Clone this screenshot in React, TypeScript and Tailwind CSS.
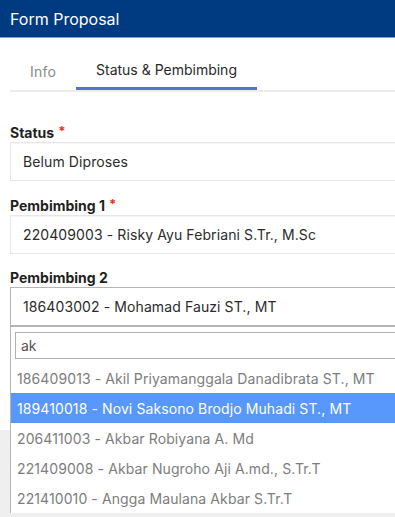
import React from "react";

const options = [
  "186409013 - Akil Priyamanggala Danadibrata ST., MT",
  "189410018 - Novi Saksono Brodjo Muhadi ST., MT",
  "206411003 - Akbar Robiyana A. Md",
  "221409008 - Akbar Nugroho Aji A.md., S.Tr.T",
  "221410010 - Angga Maulana Akbar S.Tr.T",
];

function Label({ text, required }: { text: string; required?: boolean }) {
  return (
    <div className="h-[20px] flex items-center text-[14px] font-bold text-[#1f1f1f]">
      {text}
      {required && <span className="ml-[4px] text-[#e0352b] text-[13px]">*</span>}
    </div>
  );
}

function Field({ value }: { value: string }) {
  return (
    <div className="h-[39px] flex items-center pl-[12px] border border-[#e6e6e6] bg-white text-[14px] tracking-[0.1px] text-[#2b2b2b] shadow-[inset_0_1px_1px_rgba(0,0,0,0.04)]">
      {value}
    </div>
  );
}

export default function App() {
  return (
    <div
      className="relative w-[395px] h-[517px] overflow-hidden bg-white"
      style={{ fontFamily: "Inter, 'Noto Sans', sans-serif" }}
    >
      {/* header */}
      <div className="h-[38px] bg-[#003a80] flex items-center pl-[10px] text-white text-[16px] border-b border-[#8aa0c4]">
        Form Proposal
      </div>

      {/* tabs */}
      <div className="pl-[10px] pt-[14px]">
        <div className="flex w-[430px] border-b-2 border-[#ececec] text-[14px]">
          <div className="h-[38px] flex items-center px-[20px] tracking-[0.2px] text-[#8a8a8a]">Info</div>
          <div className="h-[38px] flex items-center px-[20px] tracking-[0px] text-[#2a2a2a] border-b-[3px] border-[#5b6fd0] -mb-[2px]">
            Status &amp; Pembimbing
          </div>
        </div>
      </div>

      {/* form */}
      <div className="pl-[10px] pt-[30px] w-[430px]">
        <Label text="Status" required />
        <Field value="Belum Diproses" />
        <div className="h-[14px]" />
        <Label text="Pembimbing 1" required />
        <Field value="220409003 - Risky Ayu Febriani S.Tr., M.Sc" />
        <div className="h-[13px]" />
        <Label text="Pembimbing 2" />
        <div className="h-[39px] flex items-center pl-[12px] border border-[#b5b5b5] bg-white text-[14px] tracking-[0.1px] text-[#2b2b2b]">
          186403002 - Mohamad Fauzi ST., MT
        </div>
      </div>

      {/* page area below */}
      <div className="absolute left-0 top-[430px] w-full h-[100px] bg-[#efefef]" />

      {/* select dropdown */}
      <div className="absolute left-[10px] top-[325px] w-[420px] bg-white border border-t-2 border-[#b5b5b5] border-r-0 border-b-0">
        <div className="pl-[4px] pt-[5px] pb-[4px]">
          <div className="h-[27px] flex items-center pl-[5px] border border-[#b0b0b0] text-[14px] text-[#555]">
            ak
          </div>
        </div>
        {options.map((o, i) => (
          <div
            key={o}
            className={`h-[30px] flex items-center pl-[6px] text-[14px] tracking-[0.1px] ${
              i === 1 ? "bg-[#5897fb] text-white" : "text-[#7d7d7d]"
            }`}
          >
            {o}
          </div>
        ))}
      </div>
    </div>
  );
}
